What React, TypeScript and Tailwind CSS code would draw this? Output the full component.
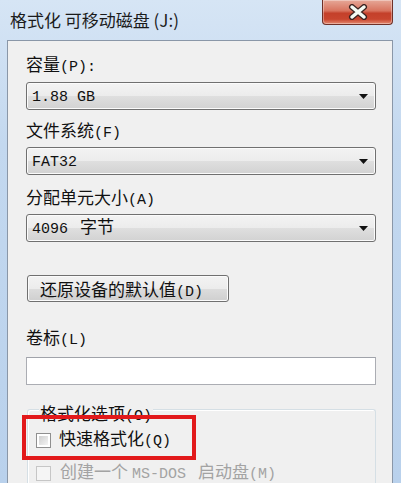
import React from "react";

const cjk = "font-['Noto_Sans_CJK_SC',sans-serif]";
const mono = "font-['Liberation_Mono',monospace] text-[15px]";

// latin run in the dialog's half-width font
const M: React.FC<{ children: React.ReactNode; className?: string }> = ({
  children,
  className = "",
}) => <span className={`${mono} ${className}`}>{children}</span>;

const Combo: React.FC<{ children: React.ReactNode; className?: string }> = ({
  children,
  className = "",
}) => (
  <div
    className={`h-[28px] flex items-center rounded-[3px] border border-[#707070] bg-[linear-gradient(#f3f3f3,#ececec_50%,#dfdfdf_50%,#d2d2d2)] shadow-[inset_0_0_0_1px_#fbfbfb] pl-[5px] pr-[7px] ${className}`}
  >
    <span className="flex-1 text-[17px] leading-[26px] text-[#111] whitespace-pre">
      {children}
    </span>
    <svg width="9" height="5" viewBox="0 0 9 5">
      <path d="M0 0h9L4.5 5z" fill="#111" />
    </svg>
  </div>
);

const Check: React.FC<{ disabled?: boolean }> = ({ disabled }) =>
  disabled ? (
    <span className="w-[15px] h-[15px] shrink-0 border border-[#c6c6c6] bg-[#f5f5f5]" />
  ) : (
    <span className="w-[15px] h-[15px] shrink-0 border border-[#8f8f8f] bg-white p-[2px]">
      <span className="block w-full h-full bg-[linear-gradient(135deg,#cfcfcf,#f4f4f4)]" />
    </span>
  );

export default function App() {
  return (
    <div
      className={`w-[401px] h-[483px] overflow-hidden flex flex-col bg-[linear-gradient(180deg,#d6e5f5,#c3d8ef_30%,#b9d1ec)] ${cjk}`}
    >
      {/* Title bar */}
      <div className="h-[40px] flex justify-between items-start shrink-0">
        <div className="pl-[10px] pt-[7px] text-[17px] leading-[26px] text-[#1b1b1b]">
          格式化 可移动磁盘 (J:)
        </div>
        <div className="mr-[8px] w-[71px] h-[25px] rounded-b-[4px] border border-t-0 border-[#6e3028] bg-[linear-gradient(180deg,#e6a898,#d8735e_45%,#c4402a_55%,#c8452e_80%,#e48a72)] flex items-center justify-center shadow-[inset_0_0_0_1px_rgba(255,255,255,0.35)]">
          <svg width="20" height="16" viewBox="0 0 20 16">
            <path d="M4 3L16 13M16 3L4 13" stroke="#3b2320" strokeWidth="6" strokeLinecap="round" />
            <path d="M4 3L16 13M16 3L4 13" stroke="#f4fbf4" strokeWidth="3.5" strokeLinecap="round" />
          </svg>
        </div>
      </div>

      {/* Client area */}
      <div className="relative flex-1 ml-[7px] mr-[8px] border border-b-0 border-[#8a97a8] bg-[#f0f0f0] pl-[18px] pr-[16px] flex flex-col text-[#111]">
        <div className="mt-[11px] h-[24px] leading-[24px] text-[17px]">
          容量<M>(P):</M>
        </div>
        <Combo className="mt-[6px]">
          <M>1.88 GB</M>
        </Combo>

        <div className="mt-[8px] h-[24px] leading-[24px] text-[17px]">
          文件系统<M>(F)</M>
        </div>
        <Combo className="mt-[5px]">
          <M>FAT32</M>
        </Combo>

        <div className="mt-[10px] h-[24px] leading-[24px] text-[17px]">
          分配单元大小<M>(A)</M>
        </div>
        <Combo className="mt-[5px]">
          <M>4096 </M>
          <span className="ml-[3px]">字节</span>
        </Combo>

        <div className="mt-[33px] self-start ml-[1px] w-[202px] h-[27px] rounded-[3px] border border-[#707070] bg-[linear-gradient(#f3f3f3,#ececec_50%,#dddddd_50%,#cfcfcf)] shadow-[inset_0_0_0_1px_#fbfbfb] pl-[12px] text-[17px] leading-[25px]">
          还原设备的默认值<M>(D)</M>
        </div>

        <div className="mt-[23px] h-[24px] leading-[24px] text-[17px]">
          卷标<M>(L)</M>
        </div>
        <div className="mt-[8px] h-[28px] border border-[#abadb3] border-t-[#a0a3aa] bg-white" />

        {/* Group box */}
        <div className="mt-[24px] ml-[1px] flex-1 rounded-t-[3px] border border-b-0 border-[#d5dfe5] shadow-[inset_1px_1px_0_#ffffff] flex flex-col pl-[8px]">
          <div className="-mt-[9px] self-start ml-[3px] px-[1px] h-[24px] leading-[24px] bg-[#f0f0f0] text-[17px]">
            格式化选项<M>(O)</M>
          </div>
          <div className="mt-[4px] h-[22px] flex items-center gap-[8px] text-[17px]">
            <Check />
            <span className="leading-[22px]">
              快速格式化<M>(Q)</M>
            </span>
          </div>
          <div className="mt-[11px] h-[22px] flex items-center gap-[9px] text-[17px] text-[#a3a3a3]">
            <Check disabled />
            <span className="leading-[22px] whitespace-pre">
              创建一个<M className="ml-[4px]">MS-DOS </M>
              <span className="ml-[3px]">启动盘</span>
              <M>(M)</M>
            </span>
          </div>
        </div>

        {/* red annotation box */}
        <div className="absolute left-[14px] top-[374px] w-[174px] h-[45px] border-[4px] border-[#e2191b]" />
      </div>
    </div>
  );
}
